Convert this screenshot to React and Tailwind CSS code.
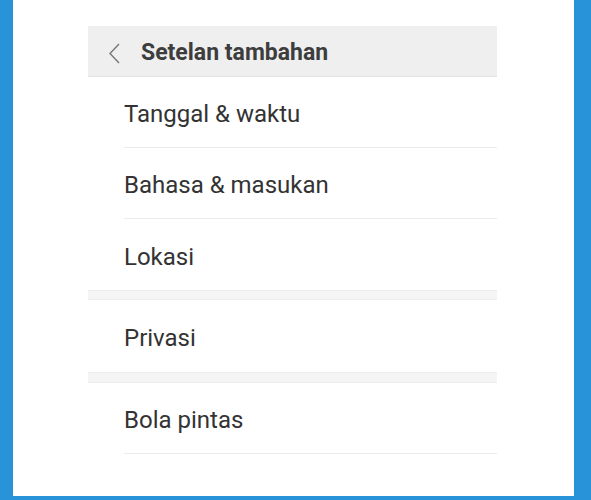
import React from "react";

const groups = [
  { gap: "", rows: ["Tanggal & waktu", "Bahasa & masukan", "Lokasi"] },
  { gap: "h-[10px]", rows: ["Privasi"], tall: true },
  { gap: "h-[11px]", rows: ["Bola pintas"] },
];

const Row = ({ label, divider, tall }) => (
  <div className="pl-9">
    <div
      className={`${tall ? "h-[72px]" : "h-[71px]"} flex items-center pt-1 text-[24px] text-[#333333] ${
        divider ? "border-b border-[#ebebeb]" : ""
      }`}
    >
      {label}
    </div>
  </div>
);

export default function App() {
  return (
    <div className="h-[500px] bg-[#2893d8] pl-[13px] pr-[17px] pb-1">
      <div
        className="h-[496px] bg-white pt-[26px] pl-[75px] pr-[77px]"
        style={{ fontFamily: "Roboto, 'Noto Sans', sans-serif" }}
      >
        <div className="h-[51px] bg-[#efeff0] border-b border-[#e2e2e2] flex items-center pt-1">
          <svg width="12" height="21" viewBox="0 0 12 21" className="ml-5 mr-[21px]">
            <path d="M11 1 L2 10.5 L11 20" fill="none" stroke="#777" strokeWidth="1.4" />
          </svg>
          <span className="text-[23px] font-bold text-[#3d3d3d]">Setelan tambahan</span>
        </div>
        {groups.map((group, gi) => (
          <div key={gi}>
            {group.gap && (
              <div className={`${group.gap} bg-[#f5f5f5] border-y border-[#ececec]`} />
            )}
            {group.rows.map((label, i) => (
              <Row
                key={label}
                label={label}
                tall={group.tall}
                divider={i < group.rows.length - 1 || gi === groups.length - 1}
              />
            ))}
          </div>
        ))}
      </div>
    </div>
  );
}
